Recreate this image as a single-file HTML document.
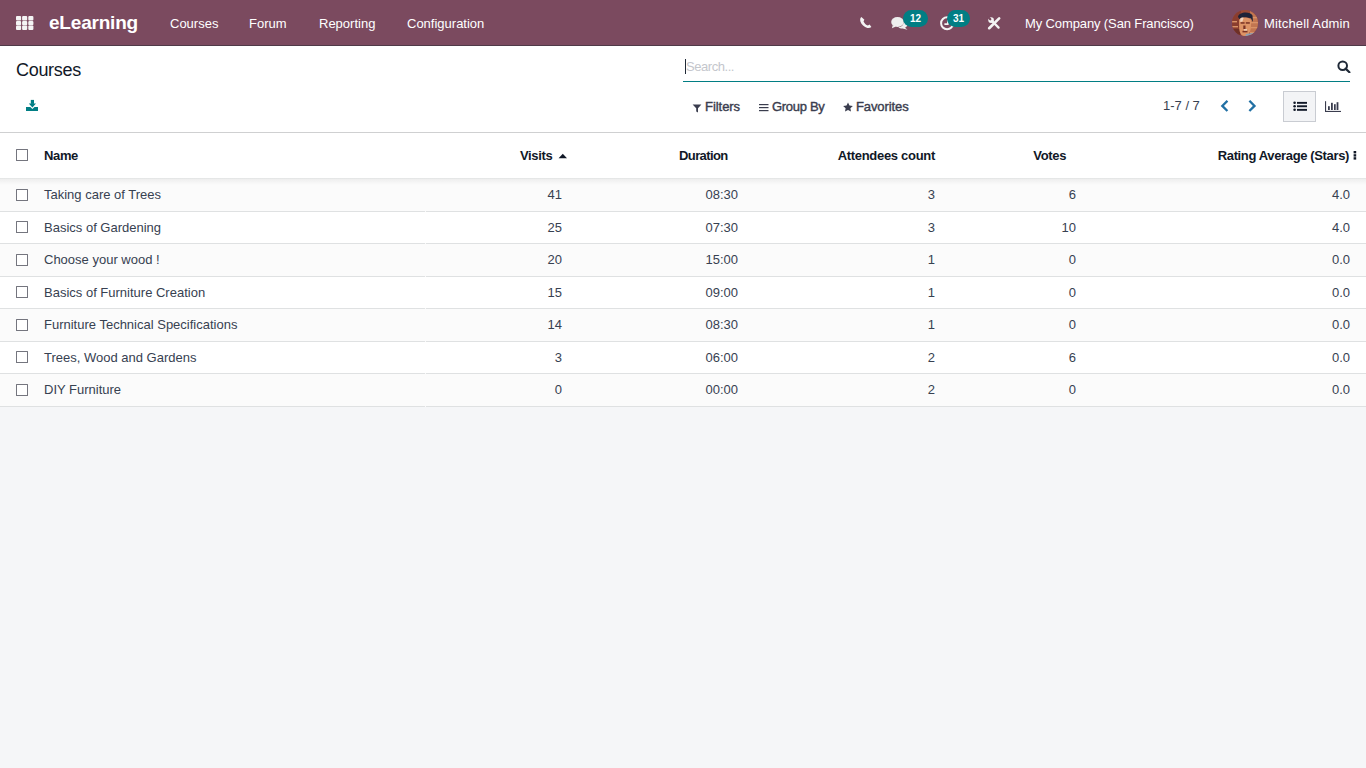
<!DOCTYPE html><html><head><meta charset="utf-8"><title>Courses - Odoo</title><style>
*{box-sizing:border-box;margin:0;padding:0}
html,body{width:1366px;height:768px;overflow:hidden;background:#f5f6f8;font-family:"Liberation Sans",sans-serif;font-size:13px;color:#374151}
.a{position:absolute;white-space:nowrap;line-height:13px}
svg.a{display:block}
#nav{position:absolute;left:0;top:0;width:1366px;height:46px;background:#7b4a5f;border-bottom:1px solid #4f3a48}
#nav .a{color:#fff}
#cp{position:absolute;left:0;top:46px;width:1366px;height:87px;background:#fff;border-bottom:1px solid #cfd0d1}
#th{position:absolute;left:0;top:133px;width:1366px;height:45px;background:#fff;z-index:3}
#shadow{position:absolute;left:0;top:178px;width:1366px;height:7px;background:linear-gradient(rgba(0,20,20,.12),rgba(0,0,0,.05) 15%,rgba(0,0,0,0));z-index:3}
.row{position:absolute;left:0;width:1366px;background:#fff}
.row.odd{background:#fbfbfb}
.ln{position:absolute;left:0;width:1366px;height:1px;background:#dfe1e2}
.cb{position:absolute;left:16px;width:12px;height:12px;border:1.5px solid #74757e;background:#fff;border-radius:0.5px}
.b{color:#111827;font-weight:bold;letter-spacing:-0.36px}
.r{text-align:right}
.m{-webkit-text-stroke:0.4px #3a3d4e;letter-spacing:-0.05px;color:#3a3d4e}
.badge{position:absolute;height:17px;border-radius:9px;background:#017e84;color:#fff;font-weight:bold;font-size:10px;line-height:17px;text-align:center}
</style></head><body>
<div id="nav">
<svg class="a" style="left:16px;top:16px" width="18" height="14" viewBox="0 0 18 14"><g fill="#f4f4f4"><rect x="0" y="0.1" width="5.1" height="4.3" rx="1"/><rect x="6.1" y="0.1" width="5.1" height="4.3" rx="1"/><rect x="12.3" y="0.1" width="5.1" height="4.3" rx="1"/><rect x="0" y="4.9" width="5.1" height="4.3" rx="1"/><rect x="6.1" y="4.9" width="5.1" height="4.3" rx="1"/><rect x="12.3" y="4.9" width="5.1" height="4.3" rx="1"/><rect x="0" y="9.6" width="5.1" height="4.3" rx="1"/><rect x="6.1" y="9.6" width="5.1" height="4.3" rx="1"/><rect x="12.3" y="9.6" width="5.1" height="4.3" rx="1"/></g></svg>
<div class="a " style="left:49px;top:13px;font-size:19px;line-height:19px;font-weight:bold;letter-spacing:-0.2px">eLearning</div>
<div class="a " style="left:170px;top:17px;">Courses</div>
<div class="a " style="left:249px;top:17px;">Forum</div>
<div class="a " style="left:319px;top:17px;">Reporting</div>
<div class="a " style="left:407px;top:17px;">Configuration</div>
<svg class="a" style="left:859px;top:16px" width="14" height="14" viewBox="0 0 14 14"><path d="M2.4 1.0 C1.2 1.8 0.9 3.6 1.4 5.4 C2.4 8.4 5.2 11.2 8.4 11.9 C10.0 12.2 11.3 11.8 12.4 10.9 L10.6 8.6 L8.9 9.6 C7.2 9.2 5.0 7.0 4.5 5.3 L5.4 3.8 Z" fill="#f4f4f4"/></svg>
<svg class="a" style="left:891px;top:16px" width="18" height="15" viewBox="0 0 18 15"><g fill="#eeeeee"><ellipse cx="6.5" cy="6" rx="6.3" ry="5"/><path d="M1.8 9 L0.9 12.2 L5 10.6 Z"/><path d="M12.6 4.2 C15.4 5 17 6.8 16.6 8.8 C16.3 10.2 15.2 11.2 14 11.7 L16.5 13.8 L11.5 12.6 C9.8 12.6 8.2 12 7.3 11.2 C10.5 11 13.2 8.8 12.6 4.2 Z"/></g></svg>
<div class="badge" style="left:903px;top:10px;width:25px">12</div>
<svg class="a" style="left:939px;top:15px" width="16" height="16" viewBox="0 0 16 16"><circle cx="8.1" cy="8.2" r="6.0" fill="none" stroke="#f4f4f4" stroke-width="2"/><path d="M8.8 5.2 V9.1 H5.4" fill="none" stroke="#f4f4f4" stroke-width="1.6"/></svg>
<div class="badge" style="left:947px;top:10px;width:23px">31</div>
<svg class="a" style="left:987px;top:16px" width="14" height="14" viewBox="-0.9 -0.9 15.8 15.8"><g stroke="#f4f4f4" fill="none"><path d="M1.6 12.9 L12.8 1.7" stroke-width="2.9" stroke-linecap="round"/><path d="M4.5 4.5 L12.2 12.2" stroke-width="2.5" stroke-linecap="round"/></g><circle cx="3.7" cy="3.7" r="3.2" fill="#f4f4f4"/><circle cx="2.8" cy="2.8" r="1.3" fill="#7b4a5f"/><path d="M2.8 2.8 L0 0" stroke="#7b4a5f" stroke-width="2.5"/></svg>
<div class="a " style="left:1025px;top:17px;letter-spacing:-0.12px">My Company (San Francisco)</div>
<svg class="a" style="left:1231px;top:9px" width="28" height="28" viewBox="0 0 28 28">
<defs><clipPath id="av"><circle cx="14" cy="14" r="13"/></clipPath></defs>
<g clip-path="url(#av)">
<rect width="28" height="28" fill="#9b4a35"/>
<rect x="0" y="0" width="10" height="28" fill="#8a3d2e"/>
<rect x="19" y="0" width="9" height="28" fill="#c27550"/>
<g fill="#d99268"><rect x="0" y="12" width="6" height="1.4"/><rect x="1" y="17" width="6" height="1.4"/><rect x="19" y="8" width="9" height="1.3"/><rect x="20" y="13" width="8" height="1.3"/><rect x="20" y="18" width="8" height="1.3"/><rect x="19" y="23" width="9" height="1.3"/></g>
<rect x="0" y="20" width="9" height="8" fill="#6e3027"/>
<path d="M7 8 C7.5 2.5 19.5 2 21.5 6.5 L22 13 L20 9.5 C17 8 11 8 8.5 10 Z" fill="#1f2338"/>
<path d="M8 11.5 C8 7.5 20 7.5 20.3 12 L19.8 19.5 C19 24.5 16.5 27.5 13.8 27.5 C11 27.5 8.6 24.5 8.2 19.5 Z" fill="#de9466"/>
<path d="M9.2 10 C10 8.5 12 8.3 12.6 9 L11.5 12.5 L9.3 13 Z" fill="#f0d2bc"/>
<g fill="#7a3325"><rect x="9.6" y="13.2" width="4" height="1.5"/><rect x="14.8" y="13.2" width="4" height="1.5"/><rect x="12.3" y="16.5" width="2.2" height="3.5"/><rect x="11.5" y="21.8" width="5" height="1.6"/></g>
<rect x="13" y="20.3" width="3" height="1.2" fill="#f2e0d0"/>
<path d="M15 25 L24 23.5 L24 28 L14 28 Z" fill="#8d9fb3"/>
</g></svg>
<div class="a " style="left:1264px;top:17px;letter-spacing:0.15px">Mitchell Admin</div>
</div>
<div id="cp">
<div class="a " style="left:16px;top:15px;font-size:18px;line-height:18px;color:#111827;letter-spacing:-0.3px">Courses</div>
<svg class="a" style="left:25px;top:53px" width="14" height="13" viewBox="0 0 14 13"><g fill="#017e84"><rect x="5.8" y="0.9" width="3.2" height="4"/><path d="M3.8 4.6 H11 L7.4 8.5 Z"/><path d="M1 8 H5.3 L7.4 10 L9.5 8 H13 V11.9 H1 Z"/></g></svg>
<div class="a" style="left:685px;top:13px;width:1px;height:15px;background:#1f2937"></div>
<div class="a " style="left:686px;top:14px;color:#c4c6cc;letter-spacing:-0.45px">Search...</div>
<div class="a" style="left:683px;top:35px;width:667px;height:1px;background:#017e84"></div>
<svg class="a" style="left:1336px;top:13px" width="16" height="14" viewBox="0 0 16 14"><circle cx="6.7" cy="6.7" r="4.3" fill="none" stroke="#1f2937" stroke-width="2"/><path d="M9.6 9.6 L13.4 13.2" stroke="#1f2937" stroke-width="2.2" stroke-linecap="round"/></svg>
<svg class="a" style="left:692px;top:57.8px" width="10" height="9" viewBox="0 0 10 9"><path d="M0.6 0.6 H9.4 L6 4.2 V8.6 L4.2 7.6 V4.2 Z" fill="#3a3d4e"/></svg>
<div class="a m" style="left:705px;top:54px;">Filters</div>
<svg class="a" style="left:759px;top:57.9px" width="10" height="8" viewBox="0 0 10 8"><g fill="#3a3d4e"><rect x="0" y="0" width="9.5" height="1.2"/><rect x="0" y="3" width="9.5" height="1.2"/><rect x="0" y="6" width="9.5" height="1.2"/></g></svg>
<div class="a m" style="left:772px;top:54px;letter-spacing:-0.3px">Group By</div>
<svg class="a" style="left:843px;top:55.5px" width="10" height="10" viewBox="-0.2 0 10.4 10.2"><path d="M5.00 0.30 L6.53 3.50 L10.04 3.96 L7.47 6.40 L8.12 9.89 L5.00 8.20 L1.88 9.89 L2.53 6.40 L-0.04 3.96 L3.47 3.50 Z" fill="#3a3d4e"/></svg>
<div class="a m" style="left:856px;top:54px;letter-spacing:-0.1px">Favorites</div>
<div class="a " style="left:1163px;top:53px;">1-7 / 7</div>
<svg class="a" style="left:1219px;top:53px" width="40" height="14" viewBox="0 0 40 14"><g fill="none" stroke="#2170a4" stroke-width="2.3" stroke-linecap="square"><path d="M7.6 2.6 L3.3 6.9 L7.6 11.2"/><path d="M31.2 2.6 L35.5 6.9 L31.2 11.2"/></g></svg>
<div class="a" style="left:1283px;top:45px;width:33px;height:31px;background:#f3f4f6;border:1px solid #c9ccd2"></div>
<svg class="a" style="left:1292px;top:55px" width="16" height="12" viewBox="0 0 16 12"><g fill="#111827"><circle cx="2.6" cy="1.8" r="1.3"/><circle cx="2.6" cy="5.2" r="1.3"/><circle cx="2.6" cy="8.8" r="1.3"/><rect x="5" y="0.9" width="10" height="1.9"/><rect x="5" y="4.3" width="10" height="1.9"/><rect x="5" y="7.9" width="10" height="1.9"/></g></svg>
<svg class="a" style="left:1324px;top:54px" width="18" height="13" viewBox="0 0 18 13"><g fill="#3a3d4e"><rect x="1" y="1.2" width="1.1" height="10.8"/><rect x="1" y="10.9" width="16" height="1.1"/><rect x="4" y="6.2" width="1.8" height="3.8"/><rect x="7" y="2.8" width="1.8" height="7.2"/><rect x="10" y="4.2" width="1.7" height="5.8"/><rect x="12.6" y="2.2" width="1.8" height="7.8"/></g></svg>
</div>
<div id="th">
<div class="cb" style="top:16px"></div>
<div class="a b" style="left:44px;top:16px;">Name</div>
<div class="a b" style="left:520px;top:16px;">Visits</div>
<svg class="a" style="left:558px;top:20px" width="10" height="6" viewBox="0 0 10 6"><path d="M0.6 5.2 L4.8 0.8 L9 5.2 Z" fill="#111827"/></svg>
<div class="a b" style="left:679px;top:16px;letter-spacing:-0.6px">Duration</div>
<div class="a b" style="right:431px;top:16px;letter-spacing:-0.3px">Attendees count</div>
<div class="a b" style="right:300px;top:16px;">Votes</div>
<div class="a b" style="right:17px;top:16px;">Rating Average (Stars)</div>
<svg class="a" style="left:1353px;top:18px" width="4" height="10" viewBox="0 0 4 10"><g fill="#111827"><rect x="0.6" y="0" width="2.6" height="2.4"/><rect x="0.6" y="3.2" width="2.6" height="2.4"/><rect x="0.6" y="6.2" width="2.6" height="2.4"/></g></svg>
</div>
<div id="shadow"></div>
<div class="row odd" style="top:178px;height:33px">
<div class="cb" style="top:11px"></div>
<div class="a " style="left:44px;top:10px;">Taking care of Trees</div>
<div class="a " style="right:804px;top:10px;">41</div>
<div class="a " style="right:628px;top:10px;">08:30</div>
<div class="a " style="right:431px;top:10px;">3</div>
<div class="a " style="right:290px;top:10px;">6</div>
<div class="a " style="right:16px;top:10px;">4.0</div>
</div>
<div class="row" style="top:211px;height:32px">
<div class="cb" style="top:10px"></div>
<div class="a " style="left:44px;top:10px;">Basics of Gardening</div>
<div class="a " style="right:804px;top:10px;">25</div>
<div class="a " style="right:628px;top:10px;">07:30</div>
<div class="a " style="right:431px;top:10px;">3</div>
<div class="a " style="right:290px;top:10px;">10</div>
<div class="a " style="right:16px;top:10px;">4.0</div>
</div>
<div class="row odd" style="top:243px;height:33px">
<div class="cb" style="top:11px"></div>
<div class="a " style="left:44px;top:10px;">Choose your wood !</div>
<div class="a " style="right:804px;top:10px;">20</div>
<div class="a " style="right:628px;top:10px;">15:00</div>
<div class="a " style="right:431px;top:10px;">1</div>
<div class="a " style="right:290px;top:10px;">0</div>
<div class="a " style="right:16px;top:10px;">0.0</div>
</div>
<div class="row" style="top:276px;height:32px">
<div class="cb" style="top:10px"></div>
<div class="a " style="left:44px;top:10px;">Basics of Furniture Creation</div>
<div class="a " style="right:804px;top:10px;">15</div>
<div class="a " style="right:628px;top:10px;">09:00</div>
<div class="a " style="right:431px;top:10px;">1</div>
<div class="a " style="right:290px;top:10px;">0</div>
<div class="a " style="right:16px;top:10px;">0.0</div>
</div>
<div class="row odd" style="top:308px;height:33px">
<div class="cb" style="top:11px"></div>
<div class="a " style="left:44px;top:10px;">Furniture Technical Specifications</div>
<div class="a " style="right:804px;top:10px;">14</div>
<div class="a " style="right:628px;top:10px;">08:30</div>
<div class="a " style="right:431px;top:10px;">1</div>
<div class="a " style="right:290px;top:10px;">0</div>
<div class="a " style="right:16px;top:10px;">0.0</div>
</div>
<div class="row" style="top:341px;height:32px">
<div class="cb" style="top:10px"></div>
<div class="a " style="left:44px;top:10px;">Trees, Wood and Gardens</div>
<div class="a " style="right:804px;top:10px;">3</div>
<div class="a " style="right:628px;top:10px;">06:00</div>
<div class="a " style="right:431px;top:10px;">2</div>
<div class="a " style="right:290px;top:10px;">6</div>
<div class="a " style="right:16px;top:10px;">0.0</div>
</div>
<div class="row odd" style="top:373px;height:33px">
<div class="cb" style="top:11px"></div>
<div class="a " style="left:44px;top:10px;">DIY Furniture</div>
<div class="a " style="right:804px;top:10px;">0</div>
<div class="a " style="right:628px;top:10px;">00:00</div>
<div class="a " style="right:431px;top:10px;">2</div>
<div class="a " style="right:290px;top:10px;">0</div>
<div class="a " style="right:16px;top:10px;">0.0</div>
</div>
<div class="ln" style="top:211px"></div><div class="a" style="left:425px;top:211px;width:1px;height:1px;background:#f9f9f9"></div>
<div class="ln" style="top:243px"></div><div class="a" style="left:425px;top:243px;width:1px;height:1px;background:#f9f9f9"></div>
<div class="ln" style="top:276px"></div><div class="a" style="left:425px;top:276px;width:1px;height:1px;background:#f9f9f9"></div>
<div class="ln" style="top:308px"></div><div class="a" style="left:425px;top:308px;width:1px;height:1px;background:#f9f9f9"></div>
<div class="ln" style="top:341px"></div><div class="a" style="left:425px;top:341px;width:1px;height:1px;background:#f9f9f9"></div>
<div class="ln" style="top:373px"></div><div class="a" style="left:425px;top:373px;width:1px;height:1px;background:#f9f9f9"></div>
<div class="ln" style="top:406px"></div><div class="a" style="left:425px;top:406px;width:1px;height:1px;background:#f9f9f9"></div>
</body></html>
